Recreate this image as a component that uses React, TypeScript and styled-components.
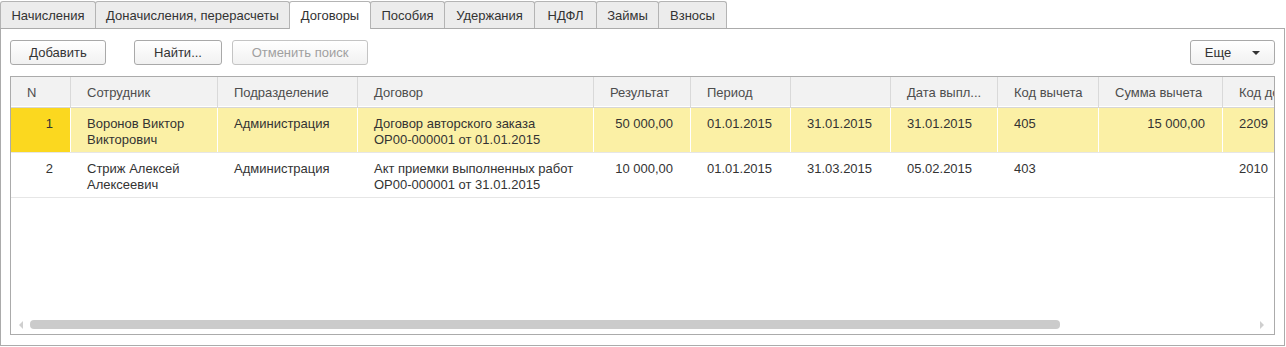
import { createGlobalStyle, styled } from "styled-components"

const GlobalStyle = createGlobalStyle`
  html, body {
    margin: 0;
    padding: 0;
    background: #ffffff;
  }
  body {
    font-family: "Liberation Sans", Arial, sans-serif;
    font-size: 13px;
    color: #333333;
  }
`

const Page = styled.div`
  width: 1286px;
  height: 347px;
  display: flex;
  flex-direction: column;
  box-sizing: border-box;
`

const TabBar = styled.div`
  display: flex;
  height: 28px;
  padding-top: 1px;
  box-sizing: border-box;
  position: relative;
  z-index: 1;
`

const Tab = styled.div<{ $active?: boolean; $w: number }>`
  width: ${({ $w }) => $w}px;
  box-sizing: border-box;
  height: ${({ $active }) => ($active ? 28 : 27)}px;
  margin-left: -1px;
  &:first-child {
    margin-left: 0;
  }
  border: 1px solid #b4b4b4;
  border-bottom: none;
  border-radius: 3px 3px 0 0;
  background: ${({ $active }) => ($active ? "#ffffff" : "#ececec")};
  display: flex;
  align-items: center;
  justify-content: center;
  color: #333333;
  white-space: nowrap;
  z-index: ${({ $active }) => ($active ? 2 : 1)};
`

const Panel = styled.div`
  flex: 1;
  border: 1px solid #ababab;
  margin-right: 1px;
  margin-bottom: 1px;
  padding: 11px 9px 10px 9px;
  display: flex;
  flex-direction: column;
  gap: 11px;
  min-height: 0;
`

const Toolbar = styled.div`
  display: flex;
  align-items: center;
  height: 25px;
`

const Button = styled.button<{ $w: number; $gap?: number; $disabled?: boolean }>`
  width: ${({ $w }) => $w}px;
  height: 25px;
  margin-right: ${({ $gap }) => $gap ?? 10}px;
  box-sizing: border-box;
  border: 1px solid ${({ $disabled }) => ($disabled ? "#c4c4c4" : "#a9a9a9")};
  border-radius: 3px;
  background: linear-gradient(#ffffff, #f1f1f1);
  font-family: "Liberation Sans", Arial, sans-serif;
  font-size: 13px;
  color: ${({ $disabled }) => ($disabled ? "#a0a0a0" : "#333333")};
  padding: 0;
  display: flex;
  align-items: center;
  justify-content: center;
  gap: 21px;
`

const Spacer = styled.div`
  flex: 1;
`

const Caret = styled.span`
  width: 0;
  height: 0;
  border-left: 4px solid transparent;
  border-right: 4px solid transparent;
  border-top: 4px solid #333333;
  margin-top: 1px;
`

const Grid = styled.div`
  flex: 1;
  border: 1px solid #ababab;
  display: flex;
  flex-direction: column;
  overflow: hidden;
  min-height: 0;
`

const Rows = styled.div`
  flex: 1;
  overflow: hidden;
`

const cols = "60px 147px 140px 236px 97px 100px 100px 107px 101px 124px 100px"

const HeaderRow = styled.div`
  display: grid;
  grid-template-columns: ${cols};
  height: 30px;
  background: #f2f2f2;
  border-bottom: 1px solid #d6d6d6;
  box-shadow: inset 0 -1px 0 #ffffff;
`

const HeadCell = styled.div`
  border-right: 1px solid #d9d9d9;
  display: flex;
  align-items: center;
  padding: 0 0 0 16px;
  color: #4d4d4d;
  white-space: nowrap;
  overflow: hidden;
`

const Row = styled.div<{ $selected?: boolean }>`
  display: grid;
  grid-template-columns: ${cols};
  height: 44px;
  background: ${({ $selected }) => ($selected ? "#fbf0a5" : "#ffffff")};
  border-bottom: 1px solid #e6e6e6;
`

const Cell = styled.div<{ $right?: boolean; $current?: boolean }>`
  border-right: 1px solid #ffffff;
  padding: ${({ $right }) => ($right ? "8px 17px 0 8px" : "8px 8px 0 16px")};
  text-align: ${({ $right }) => ($right ? "right" : "left")};
  line-height: 16px;
  background: ${({ $current }) => ($current ? "#fbd81f" : "transparent")};
  color: #333333;
  white-space: nowrap;
  overflow: hidden;
`

const ScrollBar = styled.div`
  height: 13px;
  display: flex;
  align-items: center;
  padding: 0 10px 3px 8px;
  gap: 7px;
`

const Arrow = styled.span<{ $dir: "left" | "right" }>`
  width: 0;
  height: 0;
  border-top: 4px solid transparent;
  border-bottom: 4px solid transparent;
  ${({ $dir }) =>
    $dir === "left" ? "border-right: 4px solid #cfcfcf;" : "border-left: 4px solid #cfcfcf;"}
`

const Track = styled.div`
  flex: 1;
  height: 9px;
  display: flex;
`

const Thumb = styled.div`
  width: 1030px;
  height: 9px;
  border-radius: 4px;
  background: #cbcbcb;
`

const tabs = [
  { label: "Начисления", w: 96 },
  { label: "Доначисления, перерасчеты", w: 195 },
  { label: "Договоры", w: 82, active: true },
  { label: "Пособия", w: 75 },
  { label: "Удержания", w: 91 },
  { label: "НДФЛ", w: 63 },
  { label: "Займы", w: 63 },
  { label: "Взносы", w: 69 },
]

const headers = [
  "N",
  "Сотрудник",
  "Подразделение",
  "Договор",
  "Результат",
  "Период",
  "",
  "Дата выпл...",
  "Код вычета",
  "Сумма вычета",
  "Код дохода",
]

type Line = {
  n: string
  employee: string[]
  dept: string
  contract: string[]
  result: string
  from: string
  to: string
  paid: string
  code: string
  sum: string
  income: string
}

const lines: Line[] = [
  {
    n: "1",
    employee: ["Воронов Виктор", "Викторович"],
    dept: "Администрация",
    contract: ["Договор авторского заказа", "ОР00-000001 от 01.01.2015"],
    result: "50 000,00",
    from: "01.01.2015",
    to: "31.01.2015",
    paid: "31.01.2015",
    code: "405",
    sum: "15 000,00",
    income: "2209",
  },
  {
    n: "2",
    employee: ["Стриж Алексей", "Алексеевич"],
    dept: "Администрация",
    contract: ["Акт приемки выполненных работ", "ОР00-000001 от 31.01.2015"],
    result: "10 000,00",
    from: "01.01.2015",
    to: "31.03.2015",
    paid: "05.02.2015",
    code: "403",
    sum: "",
    income: "2010",
  },
]

function Multi({ parts }: { parts: string[] }) {
  return (
    <>
      {parts.map((p, i) => (
        <div key={i}>{p}</div>
      ))}
    </>
  )
}

export default function App() {
  return (
    <>
      <GlobalStyle />
      <Page>
        <TabBar>
          {tabs.map((t) => (
            <Tab key={t.label} $w={t.w} $active={t.active}>
              {t.label}
            </Tab>
          ))}
        </TabBar>
        <Panel>
          <Toolbar>
            <Button $w={96} $gap={28}>Добавить</Button>
            <Button $w={88}>Найти...</Button>
            <Button $w={136} $disabled>
              Отменить поиск
            </Button>
            <Spacer />
            <Button $w={85} $gap={0}>
              Еще
              <Caret />
            </Button>
          </Toolbar>
          <Grid>
            <Rows>
              <HeaderRow>
                {headers.map((h, i) => (
                  <HeadCell key={i}>{h}</HeadCell>
                ))}
              </HeaderRow>
              {lines.map((l, i) => (
                <Row key={l.n} $selected={i === 0}>
                  <Cell $right $current={i === 0}>
                    {l.n}
                  </Cell>
                  <Cell>
                    <Multi parts={l.employee} />
                  </Cell>
                  <Cell>{l.dept}</Cell>
                  <Cell>
                    <Multi parts={l.contract} />
                  </Cell>
                  <Cell $right>{l.result}</Cell>
                  <Cell>{l.from}</Cell>
                  <Cell>{l.to}</Cell>
                  <Cell>{l.paid}</Cell>
                  <Cell>{l.code}</Cell>
                  <Cell $right>{l.sum}</Cell>
                  <Cell>{l.income}</Cell>
                </Row>
              ))}
            </Rows>
            <ScrollBar>
              <Arrow $dir="left" />
              <Track>
                <Thumb />
              </Track>
              <Arrow $dir="right" />
            </ScrollBar>
          </Grid>
        </Panel>
      </Page>
    </>
  )
}
